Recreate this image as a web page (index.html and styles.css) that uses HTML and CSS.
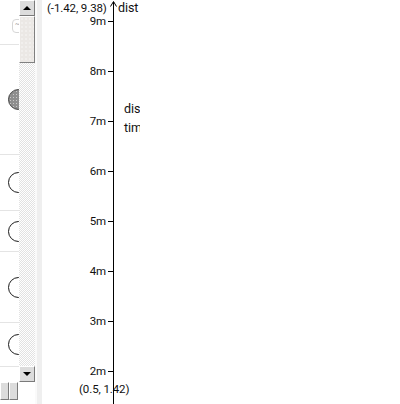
FILE: index.html
```html
<!DOCTYPE html>
<html>
<head>
<meta charset="utf-8">
<link rel="stylesheet" href="styles.css">
</head>
<body>
<div class="app">
  <div class="side">
    <div class="side-top">
      <div class="list">
        <div class="item item-a"><span class="mini">~</span></div>
        <div class="item item-b"><span class="dot dot-filled"></span></div>
        <div class="item item-c"><span class="dot"></span></div>
        <div class="item item-d"><span class="dot"></span></div>
        <div class="item item-e"><span class="dot"></span></div>
        <div class="item item-f"><span class="dot"></span></div>
      </div>
      <div class="vscroll">
        <div class="sbtn"><span class="tri-up"></span></div>
        <div class="thumb"></div>
        <div class="track"></div>
        <div class="sbtn"><span class="tri-down"></span></div>
      </div>
    </div>
    <div class="hscroll">
      <div class="hbtn"></div>
      <div class="hbtn"></div>
    </div>
  </div>
  <div class="stripe"></div>
  <div class="chart">
    <svg class="axis" width="98" height="404" viewBox="0 0 98 404">
      <line x1="71.5" y1="2" x2="71.5" y2="404" stroke="#000" stroke-width="1"/>
      <polyline points="68.5,6.5 71.5,1.5 74.5,6.5" fill="none" stroke="#000" stroke-width="1"/>
    </svg>
    <div class="coord coord-top">(-1.42, 9.38)</div>
    <div class="axis-name">dist</div>
    <div class="yaxis">
      <div class="tick"><span class="tl">9m</span><span class="tm"></span></div>
      <div class="tick"><span class="tl">8m</span><span class="tm"></span></div>
      <div class="tick"><span class="tl">7m</span><span class="tm"></span></div>
      <div class="tick"><span class="tl">6m</span><span class="tm"></span></div>
      <div class="tick"><span class="tl">5m</span><span class="tm"></span></div>
      <div class="tick"><span class="tl">4m</span><span class="tm"></span></div>
      <div class="tick"><span class="tl">3m</span><span class="tm"></span></div>
      <div class="tick"><span class="tl">2m</span><span class="tm"></span></div>
    </div>
    <div class="legend">
      <div>dis</div>
      <div>tim</div>
    </div>
    <div class="coord coord-bottom">(0.5, 1.42)</div>
  </div>
</div>
</body>
</html>
```

FILE: styles.css
```css
html, body {
  margin: 0;
  padding: 0;
  background: #fff;
}
body {
  width: 400px;
  height: 404px;
  overflow: hidden;
  font-family: Roboto, "Liberation Sans", sans-serif;
  color: #111;
}
.app {
  display: flex;
  height: 404px;
}
.side {
  width: 35px;
  display: flex;
  flex-direction: column;
}
.side-top {
  display: flex;
  height: 382px;
}
.list {
  width: 19px;
  height: 367px;
  overflow: hidden;
}
.item {
  box-sizing: border-box;
  width: 19px;
  border-bottom: 1px solid #e4e4e4;
  display: flex;
  align-items: center;
  padding-left: 8px;
  overflow: hidden;
}
.item-a { height: 45px; align-items: flex-start; padding-left: 12px; padding-top: 19px; }
.item-b { height: 110px; }
.item-c { height: 56px; }
.item-d { height: 41px; }
.item-e { height: 71px; }
.item-f { height: 44px; }
.mini {
  flex: none;
  box-sizing: border-box;
  width: 20px;
  height: 14px;
  border: 1px solid #d6d6d6;
  border-radius: 4px;
  font-size: 7px;
  line-height: 8px;
  color: #999;
  padding-left: 2px;
}
.dot {
  flex: none;
  box-sizing: border-box;
  width: 21px;
  height: 21px;
  border-radius: 50%;
  border: 1.5px solid #1a1a1a;
  background: #fff;
}
.dot-filled {
  border-color: #444;
  background-color: #8e8e8e;
  background-image: radial-gradient(circle, #c8c8c8 0.6px, transparent 0.9px);
  background-size: 3px 3px;
}
.vscroll {
  width: 16px;
  height: 382px;
  display: flex;
  flex-direction: column;
}
.sbtn {
  box-sizing: border-box;
  width: 16px;
  height: 16px;
  background: #dcdcdc;
  border: 1px solid;
  border-color: #fff #7a7a7a #7a7a7a #fff;
  display: flex;
  align-items: center;
  justify-content: center;
}
.tri-up {
  width: 0;
  height: 0;
  border-left: 4px solid transparent;
  border-right: 4px solid transparent;
  border-bottom: 4px solid #000;
}
.tri-down {
  width: 0;
  height: 0;
  border-left: 4px solid transparent;
  border-right: 4px solid transparent;
  border-top: 4px solid #000;
}
.thumb {
  box-sizing: border-box;
  height: 47px;
  background-color: #ebe8e5;
  background-image: radial-gradient(circle, #fff 0.5px, transparent 0.8px);
  background-size: 4px 4px;
  border: 1px solid;
  border-color: #fff #808080 #808080 #fff;
}
.track {
  flex: 1;
  background-image: repeating-conic-gradient(#e2e2e2 0 25%, #fff 0 50%);
  background-size: 2px 2px;
}
.hscroll {
  display: flex;
  height: 18px;
}
.hbtn {
  box-sizing: border-box;
  width: 9px;
  height: 18px;
  background: #dcdcdc;
  border: 1px solid;
  border-color: #fff #7a7a7a #7a7a7a #fff;
}
.stripe {
  width: 5px;
  border-left: 2px solid #fafafa;
  background: #efefef;
}
.chart {
  position: relative;
  width: 98px;
  height: 404px;
  overflow: hidden;
  font-size: 11.5px;
  letter-spacing: -0.1px;
}
.axis {
  position: absolute;
  left: 0;
  top: 0;
}
.coord {
  position: absolute;
  white-space: nowrap;
  line-height: 14px;
}
.coord-top {
  left: 5px;
  top: 1px;
}
.coord-bottom {
  left: 37px;
  top: 382px;
}
.axis-name {
  position: absolute;
  left: 76px;
  top: 1px;
  font-size: 12.5px;
  line-height: 14px;
}
.yaxis {
  position: absolute;
  left: 0;
  top: -4px;
  width: 71px;
  display: flex;
  flex-direction: column;
}
.tick {
  height: 50px;
  display: flex;
  align-items: center;
  justify-content: flex-end;
}
.tl {
  line-height: 14px;
  margin-right: 2px;
}
.tm {
  width: 5px;
  height: 1px;
  background: #000;
}
.legend {
  position: absolute;
  left: 82px;
  top: 99px;
  font-size: 12.5px;
  line-height: 19px;
}
```
